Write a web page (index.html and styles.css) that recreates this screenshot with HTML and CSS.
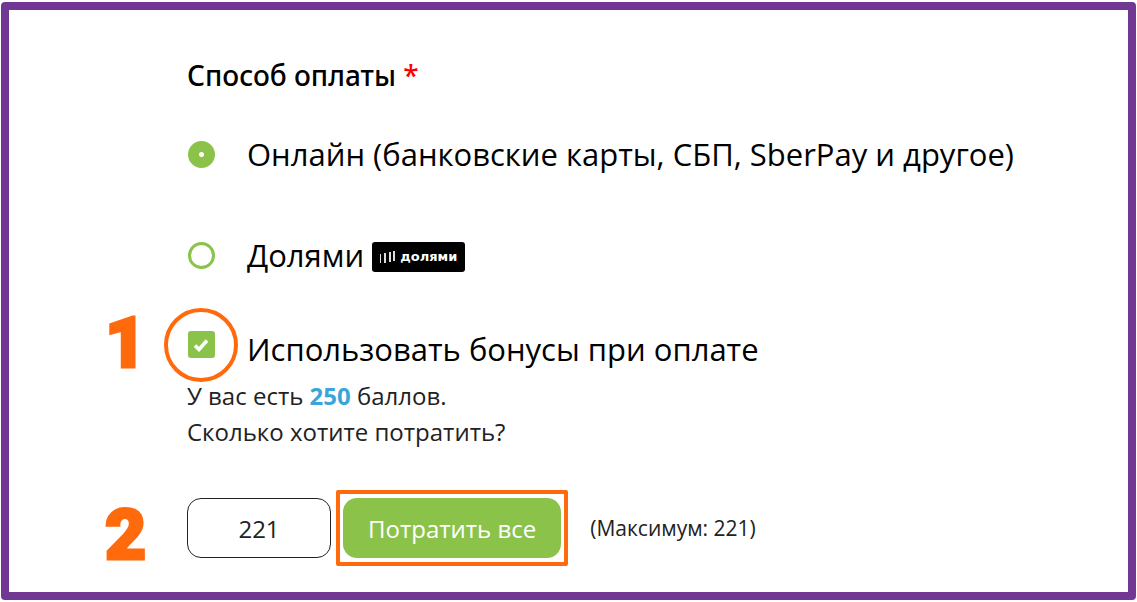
FILE: index.html
```
<!DOCTYPE html>
<html lang="ru">

	<head>
		<meta charset="UTF-8">
		<title>Способ оплаты</title>
		<link rel="stylesheet" href="styles.css">
	</head>

	<body>
		<form class="payment">
			<h3 id="payTitle">Способ оплаты <span class="required">*</span></h3>
			<div class="methods" role="radiogroup" aria-labelledby="payTitle">
				<div class="row">
					<input type="radio" name="pay" id="online" checked>
					<label for="online">Онлайн (банковские карты, СБП, SberPay и другое)</label>
				</div>
				<div class="row">
					<input type="radio" name="pay" id="parts">
					<label for="parts">Долями</label>
					<span class="badge">
						<svg width="16" height="14" viewBox="0 0 16 14" fill="#ddd">
							<rect x="0" y="4" width="1" height="9" />
							<rect x="4" y="3" width="2" height="10" />
							<rect x="9" y="2" width="2" height="10" />
							<rect x="13" y="1" width="2" height="10" />
						</svg>
						долями
					</span>
				</div>
			</div>

			<div class="row bonus">
				<span class="step">1</span>
				<span class="check">
					<input type="checkbox" id="bonus" checked>
					<svg class="tick" width="16" height="14" viewBox="0 0 16 14">
						<path d="M2 7.5l4 4L14 2.5" fill="none" stroke="#fff" stroke-width="3.6" />
					</svg>
				</span>
				<label for="bonus">Использовать бонусы при оплате</label>
			</div>
			<div class="info">
				<p>У вас есть <b>250</b> баллов.</p>
				<p><label for="amount">Сколько хотите потратить?</label></p>
			</div>

			<div class="spend">
				<span class="step">2</span>
				<input type="text" id="amount" value="221">
				<span class="mark"><button type="button">Потратить все</button></span>
				<span class="max">(Максимум: 221)</span>
			</div>
		</form>
	</body>

</html>
```

FILE: styles.css
```
*,
*::before {
	box-sizing: border-box;
}

body {
	margin: 0;
	padding: 2px 1px;
	min-height: 100vh;
	display: flex;
	background: #fff;
	color: #000;
	font-family: "Open Sans", "Noto Sans", sans-serif;
}

.payment {
	flex: 1;
	padding: 45px 24px 24px 178px;
	border: 8px solid #703892;
	border-radius: 4px;
}

h3 {
	margin: 0 0 39px;
	font-family: "Noto Sans", sans-serif;
	font-size: 28px;
	font-weight: 500;
	line-height: 40px;
}

.required {
	color: #f00;
}

.row {
	position: relative;
	display: flex;
	align-items: center;
	min-height: 40px;
	font-size: 31px;
	line-height: 40px;
}

.methods {
	display: grid;
	gap: 61px;
}

.row input {
	appearance: none;
	flex: none;
	width: 27px;
	height: 27px;
	margin: 0 32px 0 1px;
	border: 3px solid #8bc34a;
	border-radius: 50%;
}

.row input[type="radio"]:checked {
	background: radial-gradient(circle, #fff 2px, #8bc34a 3px);
}

.badge {
	display: flex;
	align-items: center;
	gap: 4px;
	height: 30px;
	margin: 4px 0 0 8px;
	padding: 0 8px;
	border-radius: 3px;
	background: #000;
	color: #fff;
	font-family: "DejaVu Sans", sans-serif;
	font-size: 13px;
	font-weight: 700;
	line-height: 28px;
}

.bonus {
	margin-top: 54px;
}

.check {
	position: relative;
	display: flex;
	margin-bottom: 10px;
}

.row .check input {
	border: 0;
	border-radius: 3px;
	background: #8bc34a;
}

.check::before {
	content: "";
	position: absolute;
	top: -23px;
	left: -23px;
	width: 74px;
	height: 74px;
	border: 4px solid #ff6a0d;
	border-radius: 50%;
}

.tick {
	position: absolute;
	top: 7px;
	left: 6px;
	pointer-events: none;
}

.step {
	position: absolute;
	top: -26px;
	left: -82px;
	color: #ff6a0d;
	font-family: Roboto, sans-serif;
	font-size: 71px;
	font-weight: 900;
	line-height: 80px;
	-webkit-text-stroke: 3px #ff6a0d;
}

.info {
	margin-top: 9px;
	color: #222;
	font-size: 24px;
	line-height: 36px;
}

.info p {
	margin: 0;
}

.info b {
	color: #3aa6d8;
}

.spend {
	position: relative;
	display: flex;
	align-items: center;
	margin-top: 40px;
	color: #222;
}

.spend .step {
	top: 5px;
}

.spend input {
	width: 144px;
	height: 60px;
	border: 1px solid #222;
	border-radius: 14px;
	background: #fff;
	color: #222;
	font: 24px "Open Sans", sans-serif;
	text-align: center;
}

.mark {
	margin-left: 5px;
	padding: 4px 3px;
	border: 4px solid #ff6a0d;
	border-radius: 2px;
}

.mark button {
	display: block;
	height: 60px;
	padding: 0 25px;
	border: 0;
	border-radius: 14px;
	background: #8bc34a;
	color: #fff;
	font: 24px "Open Sans", sans-serif;
}

.max {
	margin-left: 22px;
	font-size: 21px;
}
```
